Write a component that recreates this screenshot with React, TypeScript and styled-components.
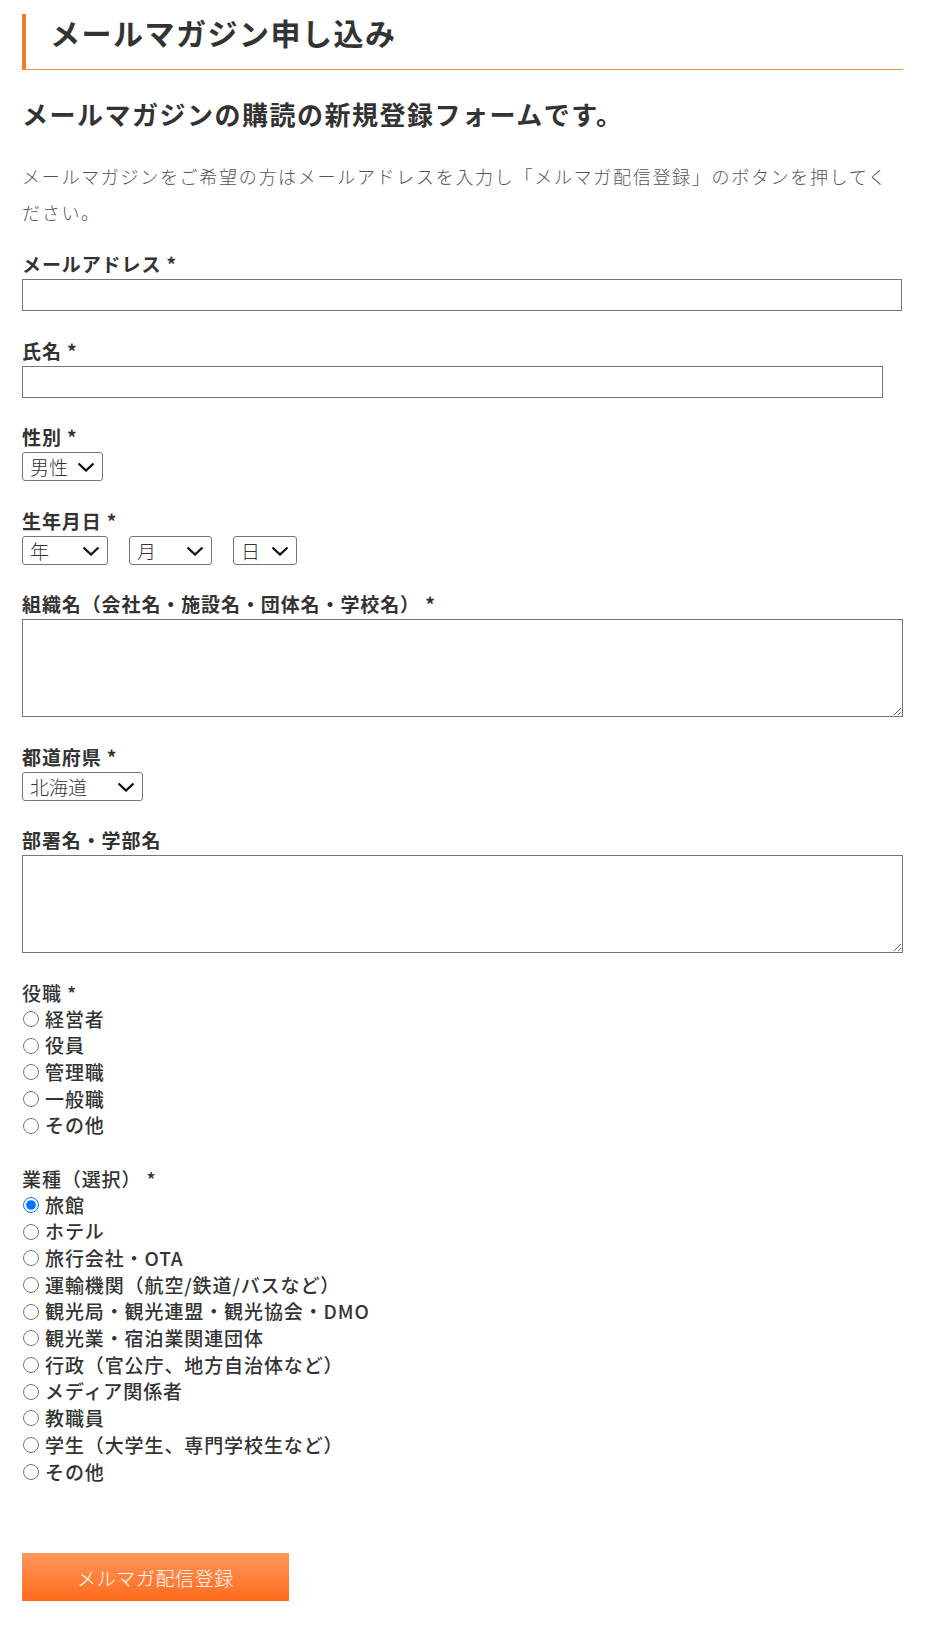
import React from 'react';
import styled, { createGlobalStyle } from 'styled-components';

const GlobalStyle = createGlobalStyle`
  body {
    margin: 0;
    background: #fff;
    color: #333;
    font-family: "Noto Sans CJK JP", "Noto Sans", sans-serif;
  }
  * {
    box-sizing: border-box;
  }
`;

const Page = styled.div`
  width: 881px;
  margin-left: 22px;
  padding-bottom: 28px;
`;

const Title = styled.h1`
  margin: 14px 0 0;
  padding: 0 0 19px 24px;
  border-left: 4px solid #f47a2c;
  border-bottom: 1px solid #f08a4b;
  font-size: 30px;
  line-height: 36px;
  letter-spacing: 1.5px;
  font-weight: 700;
  color: #333;
`;

const SubTitle = styled.h2`
  margin: 26px 0 0;
  font-size: 26px;
  line-height: 36px;
  letter-spacing: 1.5px;
  font-weight: 700;
  color: #333;
`;

const Intro = styled.p`
  margin: 26px 0 0;
  font-size: 18px;
  line-height: 36px;
  letter-spacing: 1.7px;
  font-weight: 300;
  color: #555;
`;

const Form = styled.form`
  display: flex;
  flex-direction: column;
  gap: 25.5px;
  margin-top: 20px;
`;

const Field = styled.div`
  display: flex;
  flex-direction: column;
  align-items: flex-start;
`;

const FieldLabel = styled.label<{ $group?: boolean }>`
  display: block;
  margin-bottom: ${(p) => (p.$group ? 0 : 2)}px;
  font-size: 19px;
  line-height: 27px;
  letter-spacing: 0.9px;
  font-weight: ${(p) => (p.$group ? 500 : 700)};
  color: #333;
`;

const TextInput = styled.input<{ $width: number }>`
  display: block;
  width: ${(p) => p.$width}px;
  height: 32px;
  border: 1px solid #767676;
  border-radius: 0;
  padding: 2px 6px;
  font-size: 16px;
  font-family: inherit;
  background: #fff;
`;

const TextArea = styled.textarea`
  display: block;
  width: 100%;
  height: 98px;
  border: 1px solid #767676;
  padding: 4px 6px;
  font-size: 16px;
  font-family: inherit;
  resize: vertical;
`;

const SelectBox = styled.div`
  position: relative;
  display: inline-block;
`;

const Select = styled.select<{ $width: number }>`
  appearance: none;
  -webkit-appearance: none;
  display: block;
  width: ${(p) => p.$width}px;
  height: 29px;
  border: 1px solid #767676;
  border-radius: 3px;
  padding: 0 0 0 7px;
  background: #fff;
  font-family: inherit;
  font-size: 19px;
  font-weight: 300;
  color: #333;
`;

const Chevron = styled.svg`
  position: absolute;
  right: 8px;
  top: 10px;
  width: 18px;
  height: 10px;
  pointer-events: none;
`;

const DateRow = styled.div`
  display: flex;
  gap: 21px;
`;

const RadioList = styled.div`
  display: flex;
  flex-direction: column;
`;

const RadioRow = styled.label`
  display: flex;
  align-items: center;
  font-size: 19px;
  line-height: 26.7px;
  letter-spacing: 0.9px;
  font-weight: 500;
  color: #333;
`;

const Radio = styled.input`
  width: 16px;
  height: 16px;
  margin: 0 6px 0 1px;
`;

const SubmitButton = styled.button`
  margin-top: 68px;
  width: 267px;
  height: 48px;
  border: none;
  background: linear-gradient(to bottom, #ff965c 0%, #ff6b1c 100%);
  color: #fff;
  font-family: inherit;
  font-size: 19px;
  font-weight: 300;
  letter-spacing: 0.6px;
  cursor: pointer;
`;

function Dropdown({ width, options }: { width: number; options: string[] }) {
  return (
    <SelectBox>
      <Select $width={width}>
        {options.map((o) => (
          <option key={o}>{o}</option>
        ))}
      </Select>
      <Chevron viewBox="0 0 18 10">
        <polyline points="1.5,1.5 9,8.5 16.5,1.5" fill="none" stroke="#111" strokeWidth="2.3" />
      </Chevron>
    </SelectBox>
  );
}

const years = ['年', ...Array.from({ length: 80 }, (_, i) => String(2010 - i))];
const months = ['月', ...Array.from({ length: 12 }, (_, i) => String(i + 1))];
const days = ['日', ...Array.from({ length: 31 }, (_, i) => String(i + 1))];

const roles = ['経営者', '役員', '管理職', '一般職', 'その他'];
const industries = [
  '旅館',
  'ホテル',
  '旅行会社・OTA',
  '運輸機関（航空/鉄道/バスなど）',
  '観光局・観光連盟・観光協会・DMO',
  '観光業・宿泊業関連団体',
  '行政（官公庁、地方自治体など）',
  'メディア関係者',
  '教職員',
  '学生（大学生、専門学校生など）',
  'その他',
];

export default function App(): JSX.Element {
  return (
    <Page>
      <GlobalStyle />
      <Title>メールマガジン申し込み</Title>
      <SubTitle>メールマガジンの購読の新規登録フォームです。</SubTitle>
      <Intro>
        メールマガジンをご希望の方はメールアドレスを入力し「メルマガ配信登録」のボタンを押してください。
      </Intro>

      <Form onSubmit={(e) => e.preventDefault()}>
        <Field>
          <FieldLabel>メールアドレス *</FieldLabel>
          <TextInput type="email" $width={880} />
        </Field>
        <Field>
          <FieldLabel>氏名 *</FieldLabel>
          <TextInput type="text" $width={861} />
        </Field>
        <Field>
          <FieldLabel>性別 *</FieldLabel>
          <Dropdown width={81} options={['男性', '女性']} />
        </Field>
        <Field>
          <FieldLabel>生年月日 *</FieldLabel>
          <DateRow>
            <Dropdown width={86} options={years} />
            <Dropdown width={83} options={months} />
            <Dropdown width={64} options={days} />
          </DateRow>
        </Field>
        <Field>
          <FieldLabel>組織名（会社名・施設名・団体名・学校名） *</FieldLabel>
          <TextArea />
        </Field>
        <Field>
          <FieldLabel>都道府県 *</FieldLabel>
          <Dropdown width={121} options={['北海道', '青森県', '岩手県', '宮城県', '秋田県']} />
        </Field>
        <Field>
          <FieldLabel>部署名・学部名</FieldLabel>
          <TextArea />
        </Field>
        <Field>
          <FieldLabel $group>役職 *</FieldLabel>
          <RadioList>
            {roles.map((r) => (
              <RadioRow key={r}>
                <Radio type="radio" name="role" />
                {r}
              </RadioRow>
            ))}
          </RadioList>
        </Field>
        <Field>
          <FieldLabel $group>業種（選択） *</FieldLabel>
          <RadioList>
            {industries.map((r, i) => (
              <RadioRow key={r + i}>
                <Radio type="radio" name="industry" defaultChecked={i === 0} />
                {r}
              </RadioRow>
            ))}
          </RadioList>
          <SubmitButton type="submit">メルマガ配信登録</SubmitButton>
        </Field>
      </Form>
    </Page>
  );
}
